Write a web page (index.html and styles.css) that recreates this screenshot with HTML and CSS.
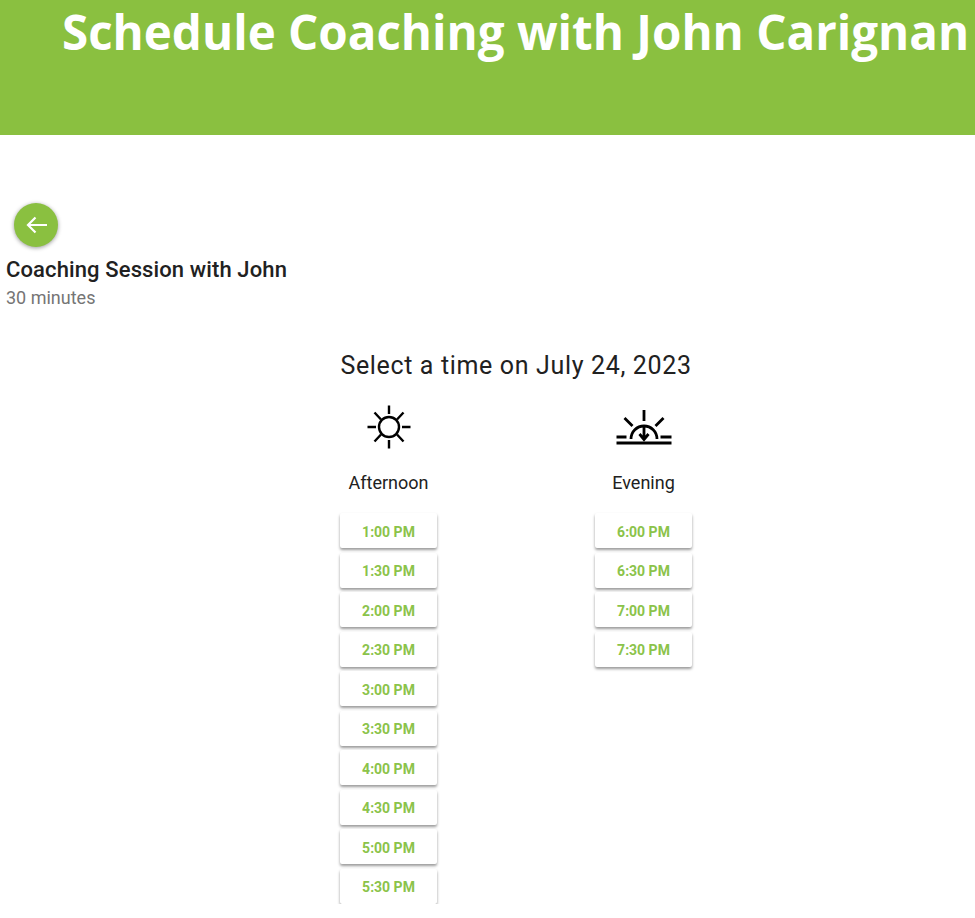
FILE: index.html
```html
<!DOCTYPE html>
<html lang="en">
<head>
    <meta charset="UTF-8" />
    <title>Schedule Coaching with John Carignan</title>
    <link rel="stylesheet" href="styles.css">
</head>
<body>
    <header class="banner">
        <h1>Schedule Coaching with John Carignan</h1>
    </header>

    <main class="scheduler">
        <button class="back-btn" aria-label="Back">
            <svg width="30" height="30" viewBox="0 0 30 30" fill="none" stroke="#fff" stroke-width="2.2"><path d="M26 15H7M14.500 7.500L7 15l7.500 7.500"/></svg>
        </button>
        <h2 class="session-name">Coaching Session with John</h2>
        <p class="session-length">30 minutes</p>

        <h3 class="date-title">Select a time on July 24, 2023</h3>

        <div class="periods">
            <section class="period">
                <svg class="period-icon" width="48" height="48" viewBox="0 0 48 48" fill="none" stroke="#000" stroke-width="2.4">
                    <circle cx="24" cy="24" r="10"/>
                    <path d="M24 2.500v8.500M24 37v8.500M2.500 24h8.500M37 24h8.500M9.500 9.500l6.500 7M32 31.500l6.500 7M38.500 9.500l-6.500 7M16 31.500l-6.500 7"/>
                </svg>
                <p class="period-name">Afternoon</p>
                <div class="slots">
                    <button class="slot">1:00 PM</button>
                    <button class="slot">1:30 PM</button>
                    <button class="slot">2:00 PM</button>
                    <button class="slot">2:30 PM</button>
                    <button class="slot">3:00 PM</button>
                    <button class="slot">3:30 PM</button>
                    <button class="slot">4:00 PM</button>
                    <button class="slot">4:30 PM</button>
                    <button class="slot">5:00 PM</button>
                    <button class="slot">5:30 PM</button>
                </div>
            </section>
            <section class="period">
                <svg class="period-icon" width="56" height="48" viewBox="0 0 56 48" fill="none" stroke="#000" stroke-width="2.8">
                    <path d="M28 7v11M8.500 15l8 8M47.500 15l-8 8"/>
                    <path d="M0.500 34h10M44.500 34h11M15 36a13 13 0 0 1 26 0"/>
                    <path d="M28 24v13M23.500 31l4.500 5.500 4.500-5.500"/>
                    <path d="M0.500 40h55" stroke-width="3"/>
                </svg>
                <p class="period-name">Evening</p>
                <div class="slots">
                    <button class="slot">6:00 PM</button>
                    <button class="slot">6:30 PM</button>
                    <button class="slot">7:00 PM</button>
                    <button class="slot">7:30 PM</button>
                </div>
            </section>
        </div>
    </main>
</body>
</html>
```

FILE: styles.css
```css
body {
    margin: 0;
    font-family: 'Roboto', sans-serif;
    background-color: #ffffff;
    color: #212121;
}

.banner {
    background-color: #8ac040;
    height: 135px;
    padding-left: 62px;
    overflow: hidden;
}

    .banner h1 {
        margin: 0;
        font-family: 'Open Sans', sans-serif;
        font-size: 47.5px;
        font-weight: 700;
        line-height: 64px;
        color: #ffffff;
        white-space: nowrap;
    }

.scheduler {
    padding: 68px 0 0 6px;
}

.back-btn {
    display: flex;
    align-items: center;
    justify-content: center;
    width: 44px;
    height: 44px;
    margin-left: 8px;
    padding: 0;
    border: 0;
    border-radius: 50%;
    background-color: #8ac040;
    box-shadow: 0 1px 4px rgba(0, 0, 0, 0.4);
}

.session-name {
    margin: 9px 0 0;
    font-size: 22px;
    font-weight: 500;
    letter-spacing: 0.12px;
    line-height: 28px;
}

.session-length {
    margin: 1px 0 0;
    font-size: 18px;
    line-height: 26px;
    color: #757575;
}

.date-title {
    margin: 37px 0 0 63px;
    width: 894px;
    text-align: center;
    font-size: 25px;
    font-weight: 400;
    letter-spacing: 0.65px;
    line-height: 36px;
}

.periods {
    display: flex;
    gap: 158px;
    margin: 19px 0 0 334px;
}

.period {
    display: flex;
    flex-direction: column;
    align-items: center;
    width: 97px;
}

.period-icon {
    display: block;
}

.period-name {
    margin: 20px 0 0;
    font-size: 18px;
    line-height: 24px;
}

.slots {
    display: flex;
    flex-direction: column;
    gap: 4.55px;
    margin-top: 18px;
}

.slot {
    width: 97px;
    height: 35px;
    padding: 2px 0 0;
    border: 0;
    border-radius: 2px;
    background-color: #ffffff;
    box-shadow: 0 2px 3px rgba(0, 0, 0, 0.4);
    font-family: 'Roboto', sans-serif;
    font-size: 14px;
    font-weight: 700;
    color: #8bc34a;
}
```
